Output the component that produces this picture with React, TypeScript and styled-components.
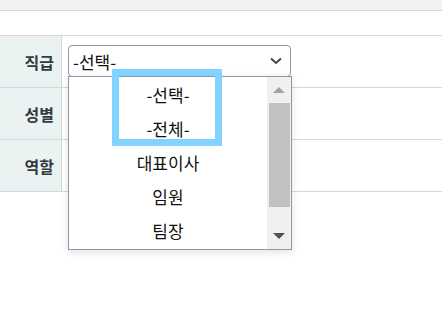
import React from 'react';
import styled, { createGlobalStyle } from 'styled-components';

const GlobalStyle = createGlobalStyle`
  html, body { margin: 0; padding: 0; background: #fff; }
  body { font-family: "Noto Sans CJK KR", "Noto Sans", sans-serif; color: #222; }
`;

const Page = styled.div`
  position: relative;
  width: 442px;
  height: 330px;
  overflow: hidden;
`;

const TopBar = styled.div`
  height: 10px;
  background: #f1f2f4;
  border-bottom: 1px solid #d5d7da;
`;

const Spacer = styled.div`
  height: 24px;
  border-bottom: 1px solid #d5d7da;
`;

const Row = styled.div`
  display: flex;
  height: 51px;
  border-bottom: 1px solid #d5d8db;
`;

const Label = styled.div`
  width: 62px;
  box-sizing: border-box;
  padding-right: 7px;
  background: #ebf3f2;
  border-right: 1px solid #d5d8db;
  display: flex;
  align-items: center;
  justify-content: flex-end;
  font-size: 16px;
  font-weight: 700;
  color: #333a40;
`;

const Cell = styled.div`
  position: relative;
  flex: 1;
  padding: 9px 0 0 6px;
`;

const SelectBox = styled.div`
  width: 223px;
  height: 32px;
  box-sizing: border-box;
  border: 1px solid #8e99a4;
  border-radius: 4px;
  display: flex;
  align-items: center;
  justify-content: space-between;
  padding: 0 8px 0 4px;
  font-size: 17px;
  color: #111;
`;

const Dropdown = styled.div`
  position: absolute;
  left: 6px;
  top: 40px;
  width: 224px;
  height: 174px;
  box-sizing: border-box;
  border: 1px solid #8898ae;
  background: #fff;
  display: flex;
  box-shadow: 0 2px 8px rgba(0, 0, 0, 0.12);
  z-index: 2;
`;

const List = styled.div`
  flex: 1;
  display: flex;
  flex-direction: column;
`;

const Option = styled.div`
  height: 34px;
  display: flex;
  align-items: center;
  justify-content: center;
  font-size: 17px;
  color: #111;
`;

const ScrollTrack = styled.div`
  width: 24px;
  background: #f0f0f0;
  display: flex;
  flex-direction: column;
  align-items: center;
`;

const Arrow = styled.div<{ $down?: boolean }>`
  height: 26px;
  display: flex;
  align-items: center;
  justify-content: center;
  width: 100%;
  &::after {
    content: '';
    width: 0;
    height: 0;
    border-left: 6px solid transparent;
    border-right: 6px solid transparent;
    ${(p) => (p.$down ? 'border-top: 6px solid #505050;' : 'border-bottom: 6px solid #a3a3a3;')}
  }
`;

const Thumb = styled.div`
  width: 21px;
  height: 104px;
  background: #c1c1c1;
`;

const TrackFill = styled.div`
  flex: 1;
`;

const Highlight = styled.div`
  position: absolute;
  left: 112px;
  top: 69px;
  width: 110px;
  height: 77px;
  box-sizing: border-box;
  border: 7px solid #82d3ff;
  z-index: 3;
`;

const Chevron = () => (
  <svg width="12" height="8" viewBox="0 0 12 8">
    <path d="M1 1.5 L6 6 L11 1.5" fill="none" stroke="#444" strokeWidth="2" />
  </svg>
);

const options = ['-선택-', '-전체-', '대표이사', '임원', '팀장'];

export default function App() {
  return (
    <Page>
      <GlobalStyle />
      <TopBar />
      <Spacer />
      <Row>
        <Label>직급</Label>
        <Cell>
          <SelectBox>
            <span>-선택-</span>
            <Chevron />
          </SelectBox>
          <Dropdown>
            <List>
              {options.map((o) => (
                <Option key={o}>{o}</Option>
              ))}
            </List>
            <ScrollTrack>
              <Arrow />
              <Thumb />
              <TrackFill />
              <Arrow $down />
            </ScrollTrack>
          </Dropdown>
        </Cell>
      </Row>
      <Row>
        <Label>성별</Label>
        <Cell />
      </Row>
      <Row>
        <Label>역할</Label>
        <Cell />
      </Row>
      <Highlight />
    </Page>
  );
}
